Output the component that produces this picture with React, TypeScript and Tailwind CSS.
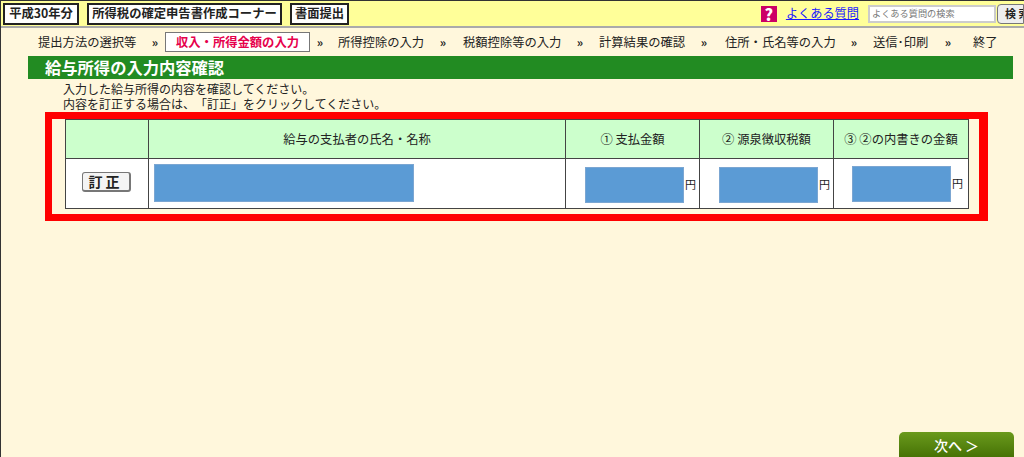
const steps = [
  { label: '提出方法の選択等', width: 'w-[107px]', gap: '' },
  { label: '収入・所得金額の入力', width: 'w-[145px]', gap: 'mr-[8px]', active: true },
  { label: '所得控除の入力', width: 'w-[95px]', gap: 'mr-[10px]' },
  { label: '税額控除等の入力', width: 'w-[107px]', gap: 'mr-[9px]' },
  { label: '計算結果の確認', width: 'w-[95px]', gap: 'mr-[11px]' },
  { label: '住所・氏名等の入力', width: 'w-[119px]', gap: 'mr-[9px]' },
  { label: '送信･印刷', width: 'w-[65px]', gap: 'mr-[15px]' },
  { label: '終了', width: 'w-[26px]', gap: '' },
];

const HeaderTag = ({ children, className }: { children: string; className: string }) => (
  <div className={`flex h-[22px] items-center justify-center border-2 border-[#222] bg-white text-[12.3px] font-bold whitespace-nowrap text-[#222] ${className}`}>
    {children}
  </div>
);

const Blue = ({ className }: { className: string }) => <div className={`border border-[#7ba6d2] bg-[#5b9bd5] ${className}`} />;

const Amount = ({ className }: { className: string }) => (
  <td className="border border-[#444] bg-white p-0">
    <div className={`flex h-[49px] items-center justify-end gap-[1px] ${className}`}>
      <Blue className="h-[36px] w-[99px]" />
      <span className="w-[11px] text-[11px] text-[#222]">円</span>
    </div>
  </td>
);

export default function App() {
  return (
    <div className="relative flex h-[457px] w-[1024px] flex-col overflow-hidden border-t border-l border-[#333] bg-[#fff7dc] font-['Noto_Sans_CJK_JP',sans-serif] [text-spacing-trim:space-all]">
      <header className="flex h-[27px] shrink-0 items-center border-b-2 border-[#aaa] bg-[#ffff99] pl-[2px]">
        <HeaderTag className="w-[76px]">平成30年分</HeaderTag>
        <HeaderTag className="ml-[8px] w-[195px]">所得税の確定申告書作成コーナー</HeaderTag>
        <HeaderTag className="ml-[8px] w-[59px]">書面提出</HeaderTag>
        <div className="ml-auto flex items-center">
          <div className="flex h-[16px] w-[16px] items-center justify-center bg-[#cc0066] text-[16px] font-black leading-none text-white">?</div>
          <a className="ml-[9px] text-[12.2px] leading-none whitespace-nowrap text-[#1a1aff] underline">よくある質問</a>
          <div className="ml-[9px] flex h-[18px] w-[128px] items-center border-2 border-[#ccc] bg-white pl-[2px] text-[9.2px] whitespace-nowrap text-[#777]">よくある質問の検索</div>
          <div className="ml-[1px] flex h-[20px] w-[27px] items-center overflow-hidden rounded-l-[4px] border border-[#777] bg-[#eee] pl-[7px] text-[11px] font-bold whitespace-nowrap text-[#222]">検 索</div>
        </div>
      </header>

      <nav className="flex h-[28px] shrink-0 items-center pl-[37px] text-[12.3px] text-[#222]">
        {steps.map((step, index) => (
          <div key={step.label} className="flex items-center">
            {step.active ? (
              <div className={`flex h-[20px] items-center justify-center border border-[#777] bg-white font-bold text-[#e6004c] ${step.width}`}>{step.label}</div>
            ) : (
              <div className={`whitespace-nowrap ${step.width}`}>{step.label}</div>
            )}
            {index < steps.length - 1 && <span className={`w-[20px] text-center text-[12px] font-bold text-[#222] ${step.gap}`}>»</span>}
          </div>
        ))}
      </nav>

      <h1 className="ml-[27px] flex h-[23px] w-[985px] shrink-0 items-center bg-[#228b22] pl-[17px] text-[16.3px] font-bold text-white">給与所得の入力内容確認</h1>

      <div className="ml-[62px] mt-[2px] text-[12px] leading-[15px] text-[#222]">
        <p>入力した給与所得の内容を確認してください。</p>
        <p>内容を訂正する場合は、「訂正」をクリックしてください。</p>
      </div>

      <div className="ml-[44px] mt-[1px] w-[943px] border-[7px] border-r-[9px] border-[#ff0000] pb-[5px] pl-[13px]">
        <table className="w-[903px] table-fixed border-collapse border border-[#444] text-[12.3px] text-[#222]">
          <colgroup>
            <col className="w-[83px]" />
            <col className="w-[417px]" />
            <col className="w-[134px]" />
            <col className="w-[134px]" />
            <col className="w-[135px]" />
          </colgroup>
          <thead>
            <tr className="h-[39px] bg-[#ccffcc]">
              <th className="border border-[#444] font-normal" />
              <th className="border border-[#444] font-normal">給与の支払者の氏名・名称</th>
              <th className="border border-[#444] font-normal">① 支払金額</th>
              <th className="border border-[#444] font-normal">② 源泉徴収税額</th>
              <th className="border border-[#444] font-normal">③ ②の内書きの金額</th>
            </tr>
          </thead>
          <tbody>
            <tr className="h-[49px]">
              <td className="border border-[#444] bg-white p-0 pr-[2px] pb-[4px] text-center">
                <button className="h-[20px] w-[49px] rounded-[3px] border border-r-2 border-b-2 border-[#777] bg-[#f4f4f4] text-[14px] leading-none font-bold tracking-[3px] text-[#222]">訂正</button>
              </td>
              <td className="border border-[#444] bg-white p-0 pb-[2px] pl-[5px]">
                <Blue className="h-[38px] w-[260px]" />
              </td>
              <Amount className="pt-[2px] pr-[3px]" />
              <Amount className="pt-[2px] pr-[3px]" />
              <Amount className="pr-[5px]" />
            </tr>
          </tbody>
        </table>
      </div>

      <button className="absolute right-[10px] bottom-[-6px] flex h-[31px] w-[115px] items-center justify-center rounded-[5px] bg-gradient-to-b from-[#6a9a1c] to-[#3f6a00] pb-[5px] text-[14px] font-medium text-white">次へ ＞</button>
    </div>
  );
}
